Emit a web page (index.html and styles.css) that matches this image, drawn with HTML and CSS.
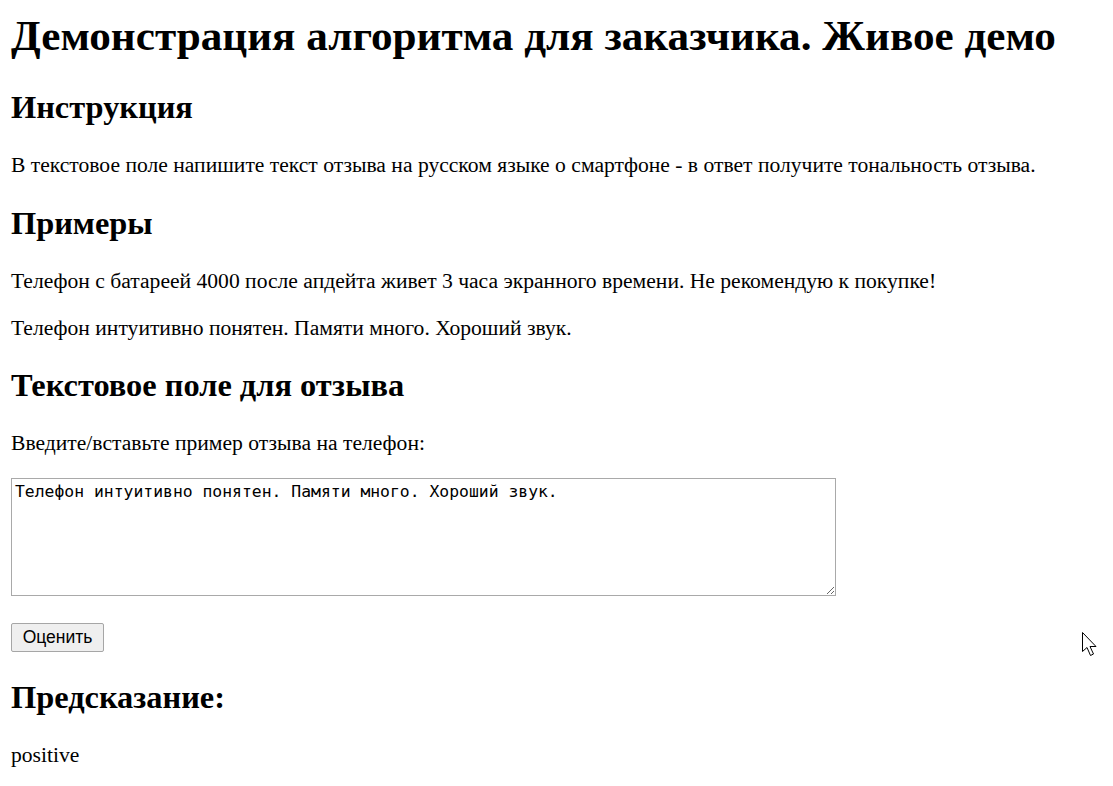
FILE: index.html
```html
<!DOCTYPE html>
<html lang="ru">
<head>
<meta charset="utf-8">
<title>Демонстрация алгоритма</title>
<link rel="stylesheet" href="styles.css">
</head>
<body>
<main class="page">
  <h1 class="title">Демонстрация алгоритма для заказчика. Живое демо</h1>
  <h2 class="section">Инструкция</h2>
  <p class="text">В текстовое поле напишите текст отзыва на русском языке о смартфоне - в ответ получите тональность отзыва.</p>
  <h2 class="section">Примеры</h2>
  <p class="text">Телефон с батареей 4000 после апдейта живет 3 часа экранного времени. Не рекомендую к покупке!</p>
  <p class="text">Телефон интуитивно понятен. Памяти много. Хороший звук.</p>
  <h2 class="section">Текстовое поле для отзыва</h2>
  <form class="review-form">
    <label class="text label" for="review">Введите/вставьте пример отзыва на телефон:</label>
    <textarea id="review" class="review-input">Телефон интуитивно понятен. Памяти много. Хороший звук.</textarea>
    <button type="button" class="submit">Оценить</button>
  </form>
  <h2 class="section">Предсказание:</h2>
  <p class="text">positive</p>
</main>
<svg class="cursor" width="20" height="28" viewBox="0 0 20 28" aria-hidden="true">
  <path d="M1.5 1.5 L1.5 20.5 L6 16.5 L9.5 24.5 L12.5 23 L9 15.5 L15 15.5 Z" fill="#fff" stroke="#000" stroke-width="1" stroke-linejoin="miter"/>
</svg>
</body>
</html>
```

FILE: styles.css
```css
html, body {
  margin: 0;
  padding: 0;
  background: #fff;
}
body {
  font-family: "Liberation Serif", "Times New Roman", serif;
  font-size: 21.6px;
  color: #000;
}
.page {
  display: block;
  padding: 10.8px 11px 0;
}
.title {
  font-size: 43.2px;
  font-weight: bold;
  line-height: 49.6px;
  margin: 0 0 28.9px;
}
.section {
  font-size: 32.4px;
  font-weight: bold;
  line-height: 37.2px;
  margin: 26.9px 0;
}
.title + .section {
  margin-top: 0;
}
.text {
  line-height: 24.8px;
  margin: 21.6px 0;
}
.review-form {
  display: block;
  margin: 0;
}
.label {
  display: block;
}
.review-input {
  display: block;
  box-sizing: border-box;
  width: 825px;
  height: 118px;
  margin: 0 0 27px;
  padding: 3px;
  border: 1px solid #a9a9a9;
  font-family: "DejaVu Sans Mono", "Liberation Mono", monospace;
  font-size: 16.4px;
  line-height: 20px;
  color: #000;
  resize: both;
}
.submit {
  display: block;
  box-sizing: border-box;
  width: 93px;
  height: 29px;
  padding: 0;
  border: 1px solid #a6a6a6;
  border-radius: 2px;
  background: #efefef;
  font-family: "Liberation Sans", Arial, sans-serif;
  font-size: 17.5px;
  color: #000;
}
.cursor {
  position: absolute;
  left: 1081px;
  top: 631px;
}
```
